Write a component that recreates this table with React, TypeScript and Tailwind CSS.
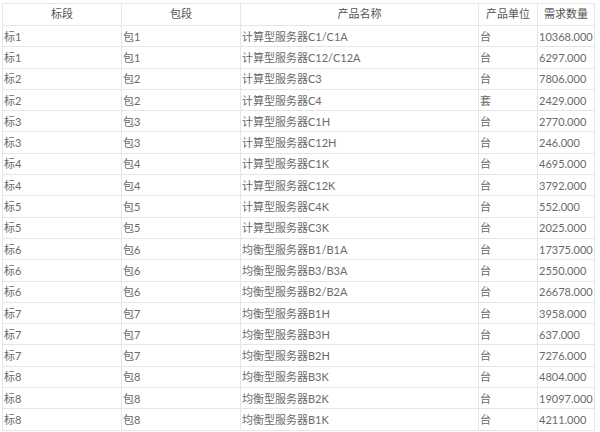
const rows: [string, string, string, string, string][] = [
  ["标1", "包1", "计算型服务器C1/C1A", "台", "10368.000"],
  ["标1", "包1", "计算型服务器C12/C12A", "台", "6297.000"],
  ["标2", "包2", "计算型服务器C3", "台", "7806.000"],
  ["标2", "包2", "计算型服务器C4", "套", "2429.000"],
  ["标3", "包3", "计算型服务器C1H", "台", "2770.000"],
  ["标3", "包3", "计算型服务器C12H", "台", "246.000"],
  ["标4", "包4", "计算型服务器C1K", "台", "4695.000"],
  ["标4", "包4", "计算型服务器C12K", "台", "3792.000"],
  ["标5", "包5", "计算型服务器C4K", "台", "552.000"],
  ["标5", "包5", "计算型服务器C3K", "台", "2025.000"],
  ["标6", "包6", "均衡型服务器B1/B1A", "台", "17375.000"],
  ["标6", "包6", "均衡型服务器B3/B3A", "台", "2550.000"],
  ["标6", "包6", "均衡型服务器B2/B2A", "台", "26678.000"],
  ["标7", "包7", "均衡型服务器B1H", "台", "3958.000"],
  ["标7", "包7", "均衡型服务器B3H", "台", "637.000"],
  ["标7", "包7", "均衡型服务器B2H", "台", "7276.000"],
  ["标8", "包8", "均衡型服务器B3K", "台", "4804.000"],
  ["标8", "包8", "均衡型服务器B2K", "台", "19097.000"],
  ["标8", "包8", "均衡型服务器B1K", "台", "4211.000"],
];

const headers = ["标段", "包段", "产品名称", "产品单位", "需求数量"];
const widths = ["w-[119px]", "w-[119px]", "w-[238px]", "w-[59px]", "w-[57px]"];

export default function App() {
  return (
    <div className="h-[432px] w-[600px] overflow-hidden bg-white pl-[2px] pt-[3px] font-['Lato','Noto_Sans_CJK_SC',sans-serif] text-[11px] text-[#6a6a6a]">
      <table className="table-fixed border-collapse">
        <thead>
          <tr className="h-[22px]">
            {headers.map((h, i) => (
              <th
                key={h}
                className={`${widths[i]} border border-[#e6e6e6] text-center font-normal text-[#555]`}
              >
                {h}
              </th>
            ))}
          </tr>
        </thead>
        <tbody>
          {rows.map((r, ri) => (
            <tr key={ri} className="h-[21.3px]">
              {r.map((c, ci) => (
                <td
                  key={ci}
                  className="border border-[#e6e6e6] px-[1px] py-0 leading-none whitespace-nowrap"
                >
                  {c}
                </td>
              ))}
            </tr>
          ))}
        </tbody>
      </table>
    </div>
  );
}
